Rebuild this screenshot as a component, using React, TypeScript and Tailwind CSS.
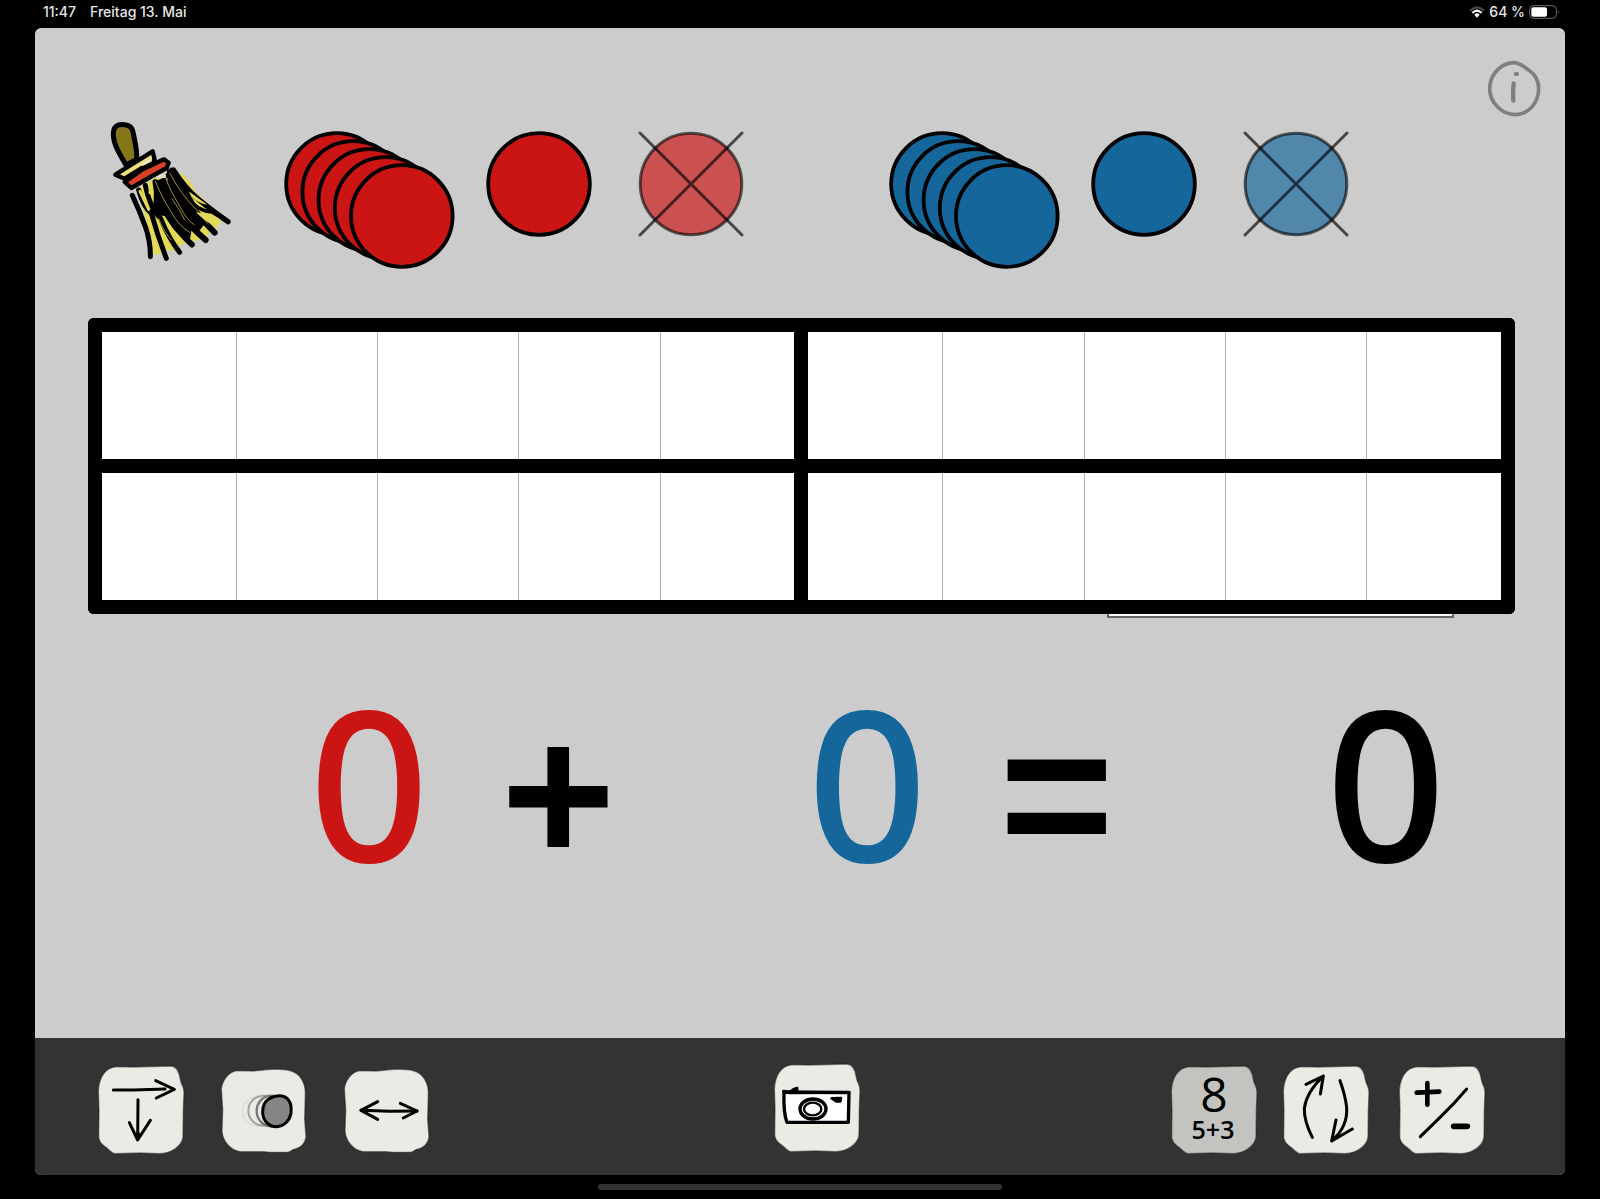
import type { ReactNode } from 'react';
import { clsx } from 'clsx';

const RED = '#cb1515';
const BLUE = '#15669a';

const TILE_TALL =
  'M4 76 C6 38 22 4 60 2 L109 3 L222 0 C240 2 247 18 250 40 C252 56 261 60 261 80 L259 132 L258 212 C256 240 222 262 189 263 L129 261 L54 263 C44 262 34 248 24 242 Q5 228 5 212 L6 132 Z';
const TILE_FLAT =
  'M4 70 C6 44 24 20 48 14 L100 15 L130 12 C150 9 200 9 216 16 C240 24 256 50 256 80 L254 160 L258 212 C256 232 242 246 222 250 C214 252 212 259 200 259 L150 259 L130 257 L60 257 C30 252 8 225 6 195 L8 130 Z';

function Stack({ color }: { color: string }) {
  return (
    <svg viewBox="0 0 171 139" className="h-[139px] w-[171px]" fill={color} stroke="#000" strokeWidth="3.8">
      {[0, 1, 2, 3, 4].map((i) => (
        <circle key={i} cx={53 + i * 16.2} cy={53 + i * 8} r="50.8" />
      ))}
    </svg>
  );
}

function Disk({ color }: { color: string }) {
  return (
    <svg viewBox="0 0 106 106" className="h-[106px] w-[106px]">
      <circle cx="53" cy="53" r="50.8" fill={color} stroke="#000" strokeWidth="3.8" />
    </svg>
  );
}

function CrossedDisk({ color }: { color: string }) {
  return (
    <svg viewBox="0 0 106 106" className="h-[106px] w-[106px]" stroke="#000" strokeWidth="3">
      <circle cx="53" cy="53" r="50.8" fill={color} fillOpacity="0.67" strokeOpacity="0.6" />
      <path d="M2 2 L104 104 M104 2 L2 104" strokeOpacity="0.65" strokeLinecap="round" />
    </svg>
  );
}

function DiskControls({ color, name }: { color: string; name: string }) {
  return (
    <div className="flex items-start pt-[21px]">
      <button type="button" aria-label={`Fünf ${name}`}>
        <Stack color={color} />
      </button>
      <button type="button" aria-label={`Ein ${name}`} className="ml-[31px]">
        <Disk color={color} />
      </button>
      <button type="button" aria-label={`${name} entfernen`} className="ml-[46px]">
        <CrossedDisk color={color} />
      </button>
    </div>
  );
}

function Broom() {
  return (
    <svg viewBox="0 0 480 480" className="h-40 w-40" strokeLinecap="round" strokeLinejoin="round">
      <path d="M140 240 L172 340 L186 434 L210 432 L226 420 L252 422 L264 408 L300 396 L340 384 L372 362 L392 338 L388 314 L350 276 L318 246 L294 206 L272 190 L220 190 Z" fill="#e3d958" />
      <g fill="none" stroke="#000" strokeWidth="15">
        <path d="M127 256 Q150 305 166 350 Q182 395 181 440" />
        <path d="M146 240 Q160 290 184 310 Q204 380 229 445" />
        <path d="M166 226 Q182 300 212 325 Q236 385 269 427" />
        <path d="M196 216 Q200 270 230 310 Q262 364 306 404" strokeWidth="17" />
        <path d="M222 212 Q240 260 268 306 Q300 350 347 390" strokeWidth="18" />
        <path d="M236 196 Q266 250 305 290 Q336 330 374 368" strokeWidth="18" />
        <path d="M250 180 Q284 232 318 262 Q360 298 414 335" strokeWidth="16" />
      </g>
      <path d="M198 212 L222 204 L236 214 L230 182 L244 172 L290 232 L318 286 L342 344 L328 362 L306 352 L300 388 L288 392 L252 360 L224 318 L206 316 L180 308 L190 290 L192 240 Z" fill="#000" />
      <path d="M318 306 L352 314 L368 322 L386 318 L390 338 L366 344 Q340 330 318 306 Z" fill="#e3d958" />
      <path d="M296 244 L352 284 Q326 280 304 260 Z" fill="#e3d958" />
      <path d="M288 258 Q322 304 366 306 L414 335" fill="none" stroke="#000" strokeWidth="11" />
      <g fill="none" stroke="#e3d958" strokeWidth="2">
        <path d="M196 214 Q220 270 240 300 Q262 344 300 368" />
        <path d="M228 208 Q244 250 270 290 Q290 330 312 344" />
        <path d="M246 266 Q270 300 284 330" />
        <path d="M240 190 Q270 250 320 300 L352 340" />
        <path d="M206 326 Q224 370 244 390 M238 344 L272 386" />
      </g>
      <path d="M150 244 L176 298 M182 216 L180 248" fill="none" stroke="#e3d958" strokeWidth="9" />
      <path d="M196 200 L214 190 L228 196 L224 204 L206 204 Z" fill="#dcdcdc" />
      <path d="M108 165 C88 130 68 100 70 68 C72 42 92 42 104 44 C126 46 128 58 132 80 C136 100 142 126 140 148 Z" fill="#857619" stroke="#000" strokeWidth="15" />
      <path d="M76 194 L188 124 L194 150 L104 206 Z" fill="#ede07c" stroke="#000" strokeWidth="13" />
      <path d="M150 164 L184 142 L186 154 L158 168 Z" fill="#ebe8bd" />
      <path d="M104 216 L158 178 L222 148 L236 158 L230 174 L176 204 L124 234 Z" fill="#d94029" stroke="#000" strokeWidth="13" />
    </svg>
  );
}

function InfoIcon() {
  return (
    <svg viewBox="0 0 162 174" className="h-[58px] w-[54px]" fill="none" stroke="#7f7f7f" strokeLinecap="round" strokeLinejoin="round">
      <path d="M80 8 C46 8 9 40 8 84 C7 128 46 164 84 164 C124 164 155 128 155 86 C155 60 142 42 126 31 C110 19 98 8 80 8 Z" strokeWidth="11" />
      <path d="M80 70 Q77 96 79 122" strokeWidth="13" />
      <path d="M86 42 L90 42" strokeWidth="12" />
    </svg>
  );
}

type ToolProps = { label: string; flat?: boolean; muted?: boolean; className?: string; children: ReactNode };

function Tool({ label, flat, muted, className, children }: ToolProps) {
  return (
    <button type="button" aria-label={label} className={clsx('h-22 w-22 shrink-0', className)}>
      <svg viewBox="0 0 264 264" className="h-22 w-22 overflow-visible" fill="none" stroke="#000" strokeWidth="9" strokeLinecap="round" strokeLinejoin="round">
        <path d={flat ? TILE_FLAT : TILE_TALL} fill={muted ? '#c3c4bf' : '#eaebe4'} stroke="#1c1c1c" strokeOpacity="0.5" strokeWidth="4" />
        {children}
      </svg>
    </button>
  );
}

function StatusBar() {
  return (
    <div className="flex h-7 items-start justify-between pt-1 pr-10 pl-[43px] font-['Inter',sans-serif] text-[14px] leading-4 font-medium text-[#e6e6e6]">
      <div className="flex gap-3.5">
        <span>11:47</span>
        <span>Freitag 13. Mai</span>
      </div>
      <div className="flex items-center gap-1">
        <svg viewBox="0 0 48 36" className="h-3 w-4" fill="none">
          <path d="M3 14 Q24 -6 45 14" stroke="#4a4a4a" strokeWidth="6" />
          <path d="M10 21 Q24 7 38 21" stroke="#fff" strokeWidth="6" />
          <path d="M16 26 Q24 18 32 26 L24 35 Z" fill="#fff" />
        </svg>
        <span>64 %</span>
        <svg viewBox="0 0 93 42" className="h-[14px] w-[31px]">
          <rect x="2" y="2" width="80" height="38" rx="11" fill="none" stroke="#6b6b6b" strokeWidth="3" />
          <rect x="7" y="7" width="47" height="28" rx="6" fill="#fff" />
          <path d="M87 14 Q92 21 87 28 Z" fill="#6b6b6b" />
        </svg>
      </div>
    </div>
  );
}

function TwentyFrame() {
  return (
    <div className="overflow-hidden rounded-md bg-black">
      <table aria-label="Zwanzigerfeld" className="w-full table-fixed border-collapse">
        <tbody>
          {[0, 1].map((row) => (
            <tr key={row}>
              {Array.from({ length: 10 }, (_, col) => (
                <td
                  key={col}
                  className={clsx(
                    'h-[141px] border-y-[14px] border-y-black bg-white p-0',
                    col === 0 || col === 5 ? 'border-l-[14px] border-l-black' : 'border-l border-l-[#b0b0b0]',
                    col === 9 && 'border-r-[14px] border-r-black',
                  )}
                />
              ))}
            </tr>
          ))}
        </tbody>
      </table>
    </div>
  );
}

function Sign({ children }: { children: string }) {
  return <span className="ml-[72px] font-['Liberation_Sans',sans-serif] text-[196px] font-bold">{children}</span>;
}

function Equation({ red, blue }: { red: number; blue: number }) {
  return (
    <div className="flex items-baseline pt-[58px] pl-[29px] font-['Noto_Sans',sans-serif] text-[210px] leading-[210px] font-medium">
      <span className="w-[312px] text-right text-[#cb1515]">{red}</span>
      <Sign>+</Sign>
      <span className="w-[312px] text-right text-[#15669a]">{blue}</span>
      <Sign>=</Sign>
      <span className="w-[332px] text-right">{red + blue}</span>
    </div>
  );
}

function Toolbar() {
  return (
    <footer className="flex h-[137px] items-start justify-between bg-[#333] pt-7 pr-[79px] pl-[62px]">
      <div className="flex gap-[35px]">
        <Tool label="Anordnung">
          <path d="M49 72 L110 72 L204 69 M176 44 L232 70 L178 96" />
          <path d="M123 101 L122 222 M97 170 L122 222 L160 163" />
          <path d="M122 224 L112 202 L134 202 Z" fill="#000" strokeWidth="2" />
        </Tool>
        <Tool label="Bewegung" flat>
          <ellipse cx="112" cy="136" rx="45" ry="44" stroke="#dedfd8" strokeWidth="5" />
          <ellipse cx="130" cy="134" rx="45" ry="45" stroke="#a2a39d" strokeWidth="6" />
          <ellipse cx="154" cy="135" rx="44" ry="46" stroke="#777" strokeWidth="7" fill="#eaebe4" />
          <path d="M162 92 C184 86 200 92 208 106 C216 118 213 134 213 142 C208 166 190 182 170 182 C146 182 128 164 128 138 C128 112 142 96 162 92 Z" fill="#858585" />
        </Tool>
        <Tool label="Tauschen" flat>
          <path d="M54 133 L140 136 L222 135" />
          <path d="M104 107 L54 133 L104 160 M172 112 L222 135 L181 156" />
          <path d="M54 133 L72 126 L72 140 Z M222 135 L204 128 L206 142 Z" fill="#000" strokeWidth="2" />
        </Tool>
      </div>
      <Tool label="Foto" className="ml-8 -translate-y-0.5">
        <path d="M33 84 Q31 148 42 175 L226 175 L228 86 Z" fill="#fff" strokeWidth="10" />
        <path d="M32 82 L50 86 L228 85" strokeWidth="10" />
        <path d="M52 82 L64 74 L73 72 L72 82 Z" fill="#000" strokeWidth="7" />
        <ellipse cx="120" cy="135" rx="39" ry="30" strokeWidth="10" />
        <ellipse cx="119" cy="135" rx="26" ry="19" strokeWidth="7" />
        <path d="M176 103 L204 102 L202 112 L190 112 Z" fill="#000" strokeWidth="8" />
      </Tool>
      <div className="flex gap-6">
        <Tool label="Zerlegung" muted>
          <g fill="#000" stroke="none" textAnchor="middle" className="font-['Open_Sans',sans-serif]">
            <text x="132" y="139" fontSize="144">8</text>
            <text x="129" y="220" fontSize="75" fontWeight="600">5+3</text>
          </g>
        </Tool>
        <Tool label="Drehen">
          <path d="M91 214 Q66 165 67 128 Q72 80 124 30 M72 55 L124 30 L115 84" />
          <path d="M174 44 Q190 88 194 124 Q198 182 149 225 M162 162 L149 225 L211 189" />
        </Tool>
        <Tool label="Plus oder Minus" className="ml-1">
          <path d="M206 69 L164 116 L120 160 L67 212" />
          <path d="M56 80 L124 77 M88 51 L88 116" strokeWidth="14" />
          <path d="M167 181 L208 181" strokeWidth="17" />
        </Tool>
      </div>
    </footer>
  );
}

export default function App() {
  return (
    <div className="flex min-h-screen flex-col bg-black">
      <StatusBar />
      <div className="mx-[35px] flex flex-1 flex-col overflow-hidden rounded-md bg-[#ccc]">
        <header className="flex h-[290px] items-start pt-[82px] pr-6 pl-[55px]">
          <button type="button" aria-label="Aufräumen">
            <Broom />
          </button>
          <div className="ml-[34px] flex gap-[145px]">
            <DiskControls color={RED} name="rotes Plättchen" />
            <DiskControls color={BLUE} name="blaues Plättchen" />
          </div>
          <button type="button" aria-label="Info" className="-mt-[50px] ml-auto">
            <InfoIcon />
          </button>
        </header>
        <main className="flex-1 pr-[50px] pl-[53px]">
          <TwentyFrame />
          <div className="mr-[61px] ml-auto h-1 w-[347px] border-2 border-t-0 border-[#666] bg-white" />
          <Equation red={0} blue={0} />
        </main>
        <Toolbar />
      </div>
      <div className="flex h-6 items-center justify-center">
        <div className="h-1.5 w-[404px] rounded-full bg-[#333]" />
      </div>
    </div>
  );
}
